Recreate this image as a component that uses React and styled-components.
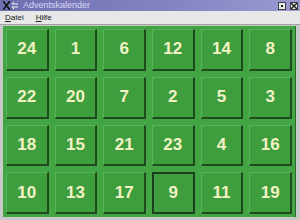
import React from "react";
import styled, { createGlobalStyle } from "styled-components";

const Global = createGlobalStyle`
  html, body { margin: 0; padding: 0; }
  body { font-family: "Liberation Sans", "DejaVu Sans", sans-serif; }
`;

const Window = styled.div`
  width: 300px;
  height: 220px;
  background: #c9c9c9;
  display: flex;
  flex-direction: column;
  overflow: hidden;
  box-sizing: border-box;
`;

const TitleBar = styled.div`
  height: 11px;
  flex: none;
  background: linear-gradient(90deg, #6f6fb0 0%, #8585c4 60%, #9a9ad0 100%);
  display: flex;
  align-items: center;
  padding: 0 2px 0 3px;
  gap: 4px;
`;

const TitleText = styled.span`
  font-family: "Liberation Sans", sans-serif;
  font-size: 9px;
  color: #d8d8f4;
  line-height: 11px;
  flex: 1;
`;

const TitleBtn = styled.div`
  width: 6px;
  height: 6px;
  background: #e8e8e8;
  border: 1px solid #404040;
  display: flex;
  align-items: center;
  justify-content: center;
`;

const MenuBar = styled.div`
  height: 13px;
  flex: none;
  background: #e7e7e7;
  border-bottom: 1px solid #a0a0a0;
  display: flex;
  align-items: center;
  padding-left: 5px;
  gap: 12px;
  font-family: "Liberation Sans", sans-serif;
  font-size: 8px;
  color: #202020;
`;

const MenuItem = styled.span`
  & u { text-decoration: underline; }
`;

const Body = styled.div`
  flex: 1;
  margin: 1px 4px 3px 3px;
  background: #43a443;
  display: grid;
  grid-template-columns: repeat(6, 1fr);
  grid-template-rows: repeat(4, 1fr);
  gap: 6px;
  padding: 3px;
  box-sizing: border-box;
  border-right: 1px solid #2a6a2a;
`;

const Door = styled.button`
  margin: 0;
  padding: 0;
  background: #3e9e3e;
  border-style: solid;
  border-width: ${(p) => (p.$focus ? "2px" : "1px 2px 2px 1px")};
  border-color: ${(p) =>
    p.$focus ? "#1b3f1b" : "#57b457 #1e4a1e #1e4a1e #57b457"};
  color: #f2f2c4;
  font-family: "Liberation Sans", "DejaVu Sans", sans-serif;
  font-weight: bold;
  font-size: 17px;
  display: flex;
  align-items: center;
  justify-content: center;
`;

const days = [24, 1, 6, 12, 14, 8, 22, 20, 7, 2, 5, 3, 18, 15, 21, 23, 4, 16, 10, 13, 17, 9, 11, 19];

export default function App() {
  return (
    <Window>
      <Global />
      <TitleBar>
        <svg width="16" height="9" viewBox="0 0 16 9">
          <path d="M0 0 L7 9 M7 0 L0 9" stroke="#101010" strokeWidth="1.6" />
          <path d="M9 3 H15 M9 6 H15" stroke="#f0f0f0" strokeWidth="1" />
          <path d="M9 3 L11 1 M9 6 L11 8" stroke="#f0f0f0" strokeWidth="1" />
        </svg>
        <TitleText>Adventskalender</TitleText>
        <TitleBtn>
          <svg width="4" height="4"><rect x="1" y="1" width="2" height="2" fill="#202020" /></svg>
        </TitleBtn>
        <TitleBtn>
          <svg width="6" height="6"><path d="M0 0 L6 6 M6 0 L0 6" stroke="#202020" strokeWidth="1.4" /></svg>
        </TitleBtn>
      </TitleBar>
      <MenuBar>
        <MenuItem><u>D</u>atei</MenuItem>
        <MenuItem><u>H</u>ilfe</MenuItem>
      </MenuBar>
      <Body>
        {days.map((d) => (
          <Door key={d} $focus={d === 9}>{d}</Door>
        ))}
      </Body>
    </Window>
  );
}
